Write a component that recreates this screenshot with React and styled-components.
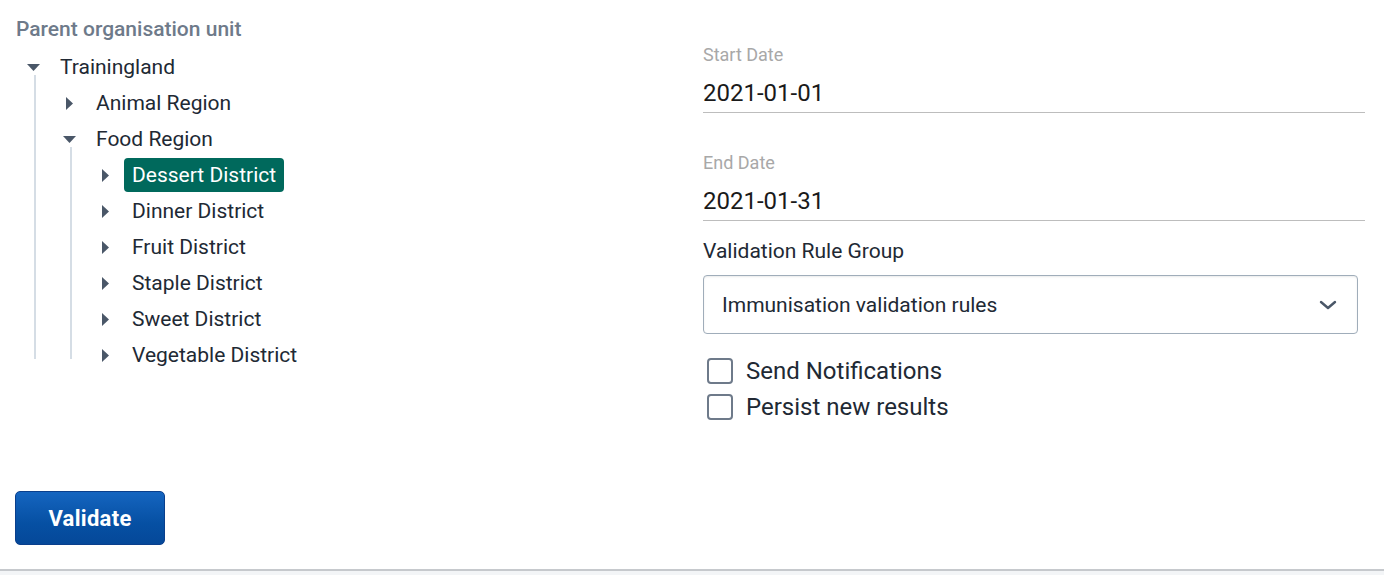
import React, { useState } from "react";
import styled, { createGlobalStyle } from "styled-components";

const Global = createGlobalStyle`
  body {
    margin: 0;
    background: #f3f5f7;
    font-family: Roboto, "Noto Sans", sans-serif;
    color: #212934;
  }
`;

const tree = {
  name: "Trainingland",
  open: true,
  children: [
    { name: "Animal Region" },
    {
      name: "Food Region",
      open: true,
      children: [
        { name: "Dessert District", selected: true },
        { name: "Dinner District" },
        { name: "Fruit District" },
        { name: "Staple District" },
        { name: "Sweet District" },
        { name: "Vegetable District" },
      ],
    },
  ],
};

function Arrow({ open }) {
  return (
    <svg width="13" height="13" viewBox="0 0 13 13">
      {open ? (
        <path d="M0 3h13L6.5 10z" fill="#4a5768" />
      ) : (
        <path d="M3 0v13l7-6.5z" fill="#4a5768" />
      )}
    </svg>
  );
}

function Node({ node }) {
  return (
    <NodeWrap>
      <NodeRow>
        <Toggle>
          <Arrow open={node.open} />
        </Toggle>
        <Label selected={node.selected}>{node.name}</Label>
      </NodeRow>
      {node.open && node.children && (
        <Children>
          {node.children.map((c) => (
            <Node key={c.name} node={c} />
          ))}
        </Children>
      )}
    </NodeWrap>
  );
}

function Checkbox({ label }) {
  const [checked, setChecked] = useState(false);
  return (
    <CheckRow onClick={() => setChecked(!checked)}>
      <Box checked={checked} />
      <span>{label}</span>
    </CheckRow>
  );
}

export default function App() {
  return (
    <>
      <Global />
      <Card>
        <Columns>
          <Left>
            <Title>Parent organisation unit</Title>
            <Tree>
              <Node node={tree} />
            </Tree>
          </Left>
          <Right>
            <DateField>
              <DateLabel>Start Date</DateLabel>
              <DateValue>2021-01-01</DateValue>
            </DateField>
            <DateField>
              <DateLabel>End Date</DateLabel>
              <DateValue>2021-01-31</DateValue>
            </DateField>
            <FieldLabel>Validation Rule Group</FieldLabel>
            <Select>
              <span>Immunisation validation rules</span>
              <svg width="20" height="20" viewBox="0 0 20 20">
                <path
                  d="M3 7l7 6 7-6"
                  fill="none"
                  stroke="#4a5768"
                  strokeWidth="2.4"
                  strokeLinecap="round"
                  strokeLinejoin="round"
                />
              </svg>
            </Select>
            <Checks>
              <Checkbox label="Send Notifications" />
              <Checkbox label="Persist new results" />
            </Checks>
          </Right>
        </Columns>
        <Button>Validate</Button>
      </Card>
    </>
  );
}

const Card = styled.main`
  background: #fff;
  height: 571px;
  box-sizing: border-box;
  padding: 16px 0 0 15px;
  border-bottom: 2px solid #c6c9cd;
  display: flex;
  flex-direction: column;
`;

const Columns = styled.div`
  display: flex;
  height: 475px;
`;

const Left = styled.section`
  width: 687px;
  padding-left: 1px;
`;

const Title = styled.h3`
  margin: 0;
  font-size: 21px;
  font-weight: 500;
  color: #6e7a8a;
  line-height: 26px;
`;

const Tree = styled.div`
  margin-top: 7px;
  margin-left: 8px;
`;

const NodeWrap = styled.div``;

const NodeRow = styled.div`
  display: flex;
  align-items: center;
  height: 36px;
`;

const Toggle = styled.span`
  width: 36px;
  display: flex;
  align-items: center;
  padding-left: 3px;
  box-sizing: border-box;
`;

const Label = styled.span`
  font-size: 21px;
  line-height: 34px;
  padding: 0 8px;
  margin-left: -8px;
  border-radius: 4px;
  color: ${(p) => (p.selected ? "#fff" : "#212934")};
  background: ${(p) => (p.selected ? "#00695c" : "transparent")};
`;

const Children = styled.div`
  margin-left: 36px;
  position: relative;
  &::before {
    content: "";
    position: absolute;
    left: -26px;
    top: -10px;
    bottom: 14px;
    width: 2px;
    background: #d5dde5;
  }
`;

const Right = styled.section`
  width: 662px;
  padding-top: 28px;
`;

const DateField = styled.div`
  border-bottom: 1px solid #bdbdbd;
  margin-bottom: 39px;
  padding-bottom: 4px;
`;

const DateLabel = styled.div`
  font-size: 18px;
  color: #a8a8a8;
  line-height: 22px;
`;

const DateValue = styled.div`
  font-size: 24px;
  color: #1a1a1a;
  line-height: 30px;
  margin-top: 12px;
`;

const FieldLabel = styled.div`
  margin-top: -22px;
  font-size: 21px;
  line-height: 26px;
  color: #212934;
`;

const Select = styled.div`
  margin-top: 11px;
  width: 655px;
  height: 59px;
  box-sizing: border-box;
  border: 1px solid #a0adba;
  border-radius: 4px;
  display: flex;
  align-items: center;
  justify-content: space-between;
  padding: 0 19px 0 18px;
  font-size: 21px;
  color: #212934;
  box-shadow: inset 0 1px 2px rgba(48, 54, 60, 0.1);
`;

const Checks = styled.div`
  margin-top: 23px;
  display: flex;
  flex-direction: column;
  gap: 8px;
`;

const CheckRow = styled.label`
  display: flex;
  align-items: center;
  gap: 13px;
  font-size: 24px;
  line-height: 28px;
  padding-left: 4px;
  color: #212934;
  cursor: pointer;
`;

const Box = styled.span`
  width: 26px;
  height: 26px;
  box-sizing: border-box;
  border: 2.5px solid #6e7a8a;
  border-radius: 4px;
  background: ${(p) => (p.checked ? "#1565c0" : "#fff")};
`;

const Button = styled.button`
  width: 150px;
  height: 54px;
  border: 1px solid #0a3f8c;
  border-radius: 5px;
  background: linear-gradient(180deg, #1565c0, #0650a3 60%, #054899);
  color: #fff;
  font-family: Roboto, sans-serif;
  font-weight: 700;
  font-size: 22px;
  letter-spacing: 0.3px;
  cursor: pointer;
`;
